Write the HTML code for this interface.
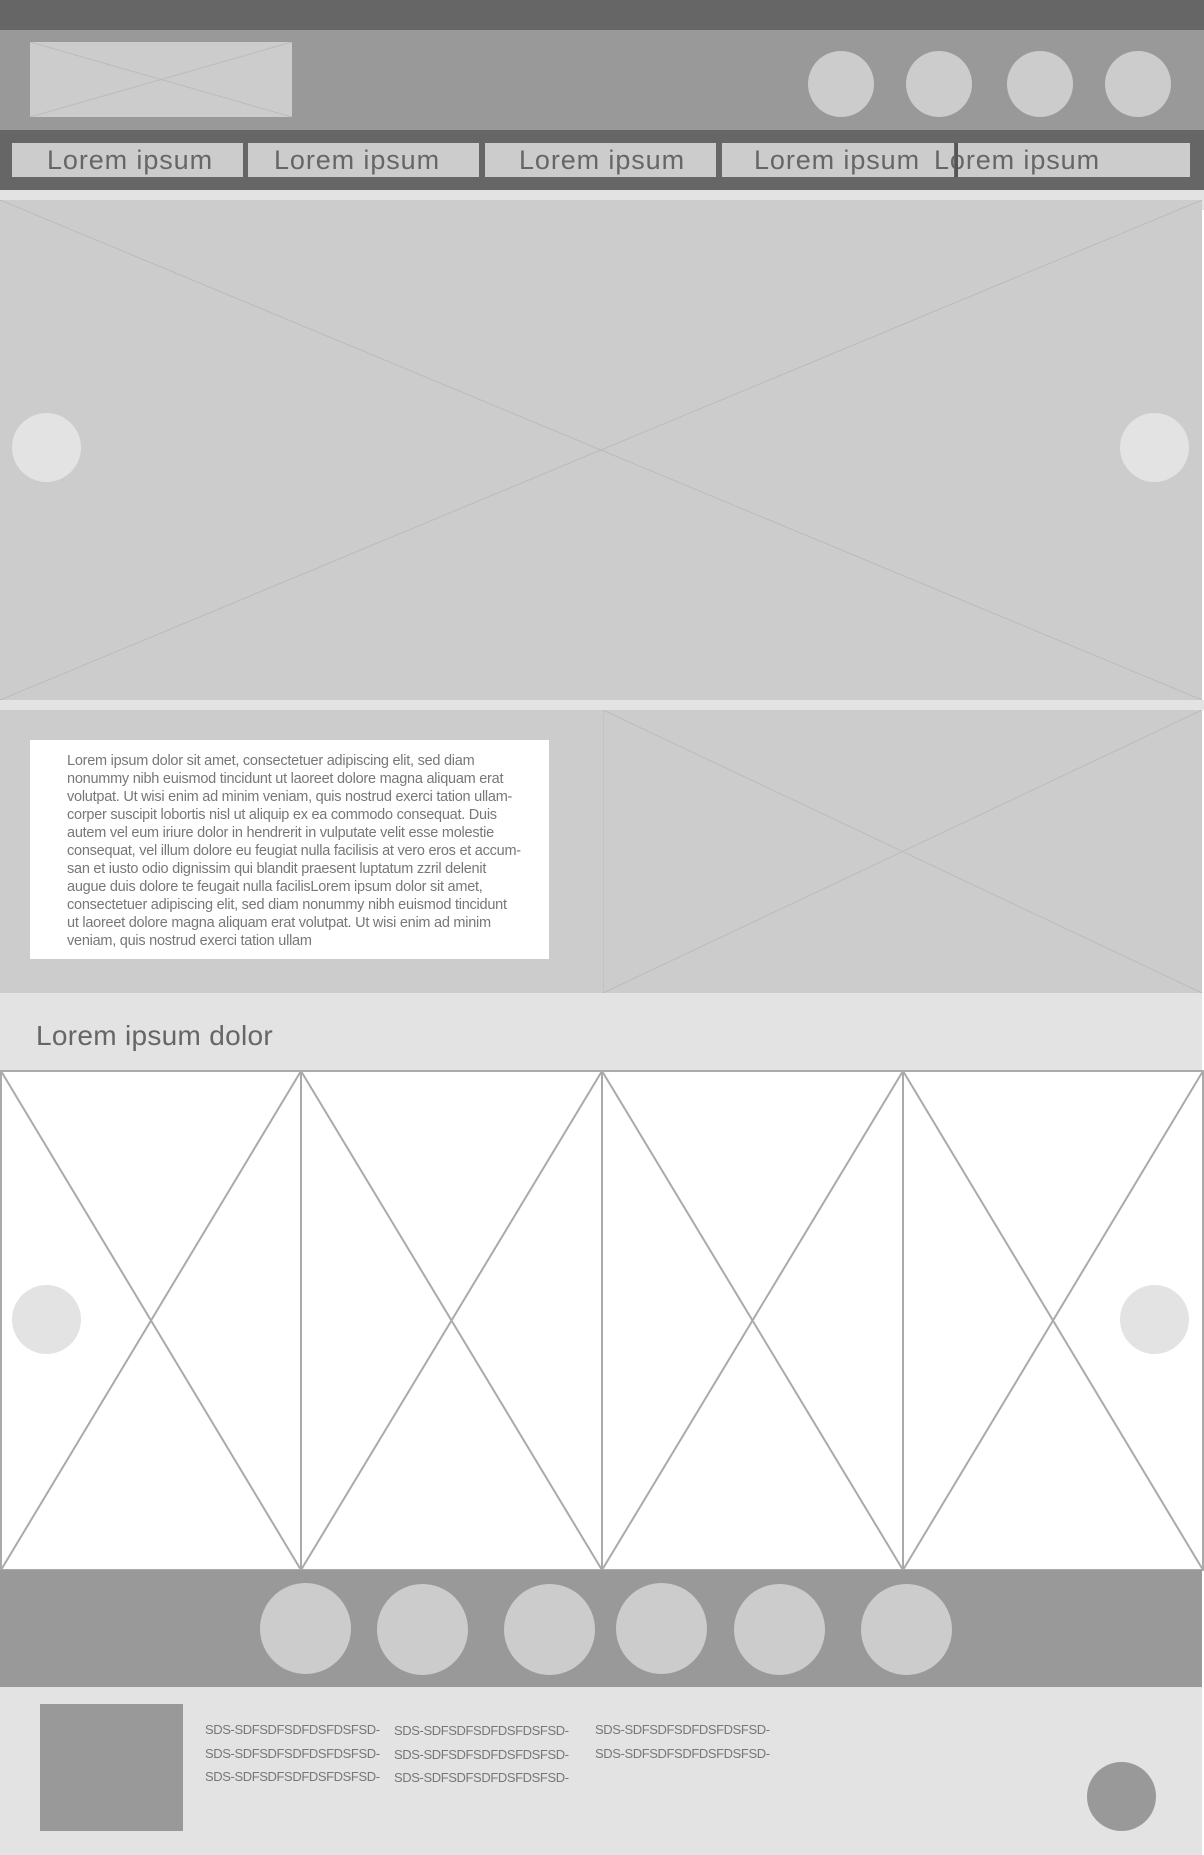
<!DOCTYPE html>
<html><head><meta charset="utf-8"><style>
*{margin:0;padding:0;box-sizing:border-box}
body{width:1204px;height:1855px;background:#fff;position:relative;overflow:hidden;font-family:"Liberation Sans",sans-serif;color:#666}
.a{position:absolute}
.c{position:absolute;border-radius:50%}
.nav{position:absolute;top:143px;height:34px;background:#ccc;font-size:27px;color:#666;line-height:34px;letter-spacing:0.9px;white-space:nowrap}
.ft{position:absolute;font-size:13px;color:#777;letter-spacing:-0.4px;line-height:23.5px;white-space:nowrap}
</style></head><body>
<div class="a" style="left:0;top:0;width:1204px;height:30px;background:#666"></div>
<div class="a" style="left:0;top:30px;width:1204px;height:100px;background:#999"></div>
<svg class="a" style="left:30px;top:42px" width="262" height="75"><rect width="262" height="75" fill="#ccc"/><line x1="0" y1="0" x2="262" y2="75" stroke="#bbb"/><line x1="262" y1="0" x2="0" y2="75" stroke="#bbb"/></svg>
<div class="c" style="left:808px;top:51px;width:66px;height:66px;background:#ccc"></div>
<div class="c" style="left:906px;top:51px;width:66px;height:66px;background:#ccc"></div>
<div class="c" style="left:1007px;top:51px;width:66px;height:66px;background:#ccc"></div>
<div class="c" style="left:1105px;top:51px;width:66px;height:66px;background:#ccc"></div>
<div class="a" style="left:0;top:130px;width:1204px;height:60px;background:#666"></div>
<div class="nav" style="left:12px;width:231px;padding-left:35px">Lorem ipsum</div>
<div class="nav" style="left:248px;width:231px;padding-left:26px">Lorem ipsum</div>
<div class="nav" style="left:485px;width:231px;padding-left:34px">Lorem ipsum</div>
<div class="nav" style="left:722px;width:232px;padding-left:32px">Lorem ipsum</div>
<div class="nav" style="left:957px;width:233px;padding-left:0;background:#ccc"><span style="margin-left:-23px">Lorem ipsum</span></div>
<div class="a" style="left:955px;top:143px;width:3px;height:34px;background:#555"></div>
<div class="a" style="left:0;top:190px;width:1204px;height:20px;background:#e3e3e3"></div>
<svg class="a" style="left:0;top:200px" width="1202" height="500"><rect width="1202" height="500" fill="#ccc"/><line x1="0" y1="0" x2="1202" y2="500" stroke="#bbb"/><line x1="1202" y1="0" x2="0" y2="500" stroke="#bbb"/></svg>
<div class="c" style="left:12px;top:413px;width:69px;height:69px;background:#e3e3e3"></div>
<div class="c" style="left:1120px;top:413px;width:69px;height:69px;background:#e3e3e3"></div>
<div class="a" style="left:0;top:700px;width:1204px;height:10px;background:#e3e3e3"></div>
<div class="a" style="left:0;top:710px;width:1202px;height:283px;background:#ccc"></div>
<div class="a" style="left:30px;top:740px;width:519px;height:219px;background:#fff"></div>
<div class="ft" style="left:67px;top:752px;font-size:14.5px;line-height:18px;color:#777;letter-spacing:-0.25px">Lorem ipsum dolor sit amet, consectetuer adipiscing elit, sed diam<br>nonummy nibh euismod tincidunt ut laoreet dolore magna aliquam erat<br>volutpat. Ut wisi enim ad minim veniam, quis nostrud exerci tation ullam-<br>corper suscipit lobortis nisl ut aliquip ex ea commodo consequat. Duis<br>autem vel eum iriure dolor in hendrerit in vulputate velit esse molestie<br>consequat, vel illum dolore eu feugiat nulla facilisis at vero eros et accum-<br>san et iusto odio dignissim qui blandit praesent luptatum zzril delenit<br>augue duis dolore te feugait nulla facilisLorem ipsum dolor sit amet,<br>consectetuer adipiscing elit, sed diam nonummy nibh euismod tincidunt<br>ut laoreet dolore magna aliquam erat volutpat. Ut wisi enim ad minim<br>veniam, quis nostrud exerci tation ullam</div>
<svg class="a" style="left:603px;top:710px" width="599" height="283"><rect width="599" height="283" fill="#ccc"/><line x1="0" y1="0" x2="0" y2="283" stroke="#bbb"/><line x1="0" y1="0" x2="599" y2="283" stroke="#bbb"/><line x1="599" y1="0" x2="0" y2="283" stroke="#bbb"/></svg>
<div class="a" style="left:0;top:993px;width:1202px;height:77px;background:#e3e3e3"></div>
<div class="a" style="left:36px;top:1020px;font-size:28px;color:#666;letter-spacing:0.3px">Lorem ipsum dolor</div>
<svg class="a" style="left:0;top:1070px" width="1204" height="501">
<rect x="1" y="1" width="1202" height="499" fill="#fff" stroke="#aaa" stroke-width="2"/>
<g stroke="#aaa" stroke-width="2" fill="none">
<line x1="301" y1="0" x2="301" y2="501"/><line x1="602" y1="0" x2="602" y2="501"/><line x1="903" y1="0" x2="903" y2="501"/>
<path d="M1 1L301 500M301 1L1 500M301 1L602 500M602 1L301 500M602 1L903 500M903 1L602 500M903 1L1203 500M1203 1L903 500"/>
</g></svg>
<div class="c" style="left:12px;top:1285px;width:69px;height:69px;background:#e3e3e3"></div>
<div class="c" style="left:1120px;top:1285px;width:69px;height:69px;background:#e3e3e3"></div>
<div class="a" style="left:0;top:1570px;width:1202px;height:117px;background:#999"></div>
<div class="c" style="left:260px;top:1583px;width:91px;height:91px;background:#ccc"></div>
<div class="c" style="left:377px;top:1584px;width:91px;height:91px;background:#ccc"></div>
<div class="c" style="left:504px;top:1584px;width:91px;height:91px;background:#ccc"></div>
<div class="c" style="left:616px;top:1583px;width:91px;height:91px;background:#ccc"></div>
<div class="c" style="left:734px;top:1584px;width:91px;height:91px;background:#ccc"></div>
<div class="c" style="left:861px;top:1584px;width:91px;height:91px;background:#ccc"></div>
<div class="a" style="left:0;top:1687px;width:1202px;height:168px;background:#e3e3e3"></div>
<div class="a" style="left:40px;top:1704px;width:143px;height:127px;background:#999"></div>
<div class="ft" style="left:205px;top:1718px">SDS-SDFSDFSDFDSFDSFSD-<br>SDS-SDFSDFSDFDSFDSFSD-<br>SDS-SDFSDFSDFDSFDSFSD-</div>
<div class="ft" style="left:394px;top:1719px">SDS-SDFSDFSDFDSFDSFSD-<br>SDS-SDFSDFSDFDSFDSFSD-<br>SDS-SDFSDFSDFDSFDSFSD-</div>
<div class="ft" style="left:595px;top:1718px">SDS-SDFSDFSDFDSFDSFSD-<br>SDS-SDFSDFSDFDSFDSFSD-</div>
<div class="c" style="left:1087px;top:1762px;width:69px;height:69px;background:#999"></div>
</body></html>
